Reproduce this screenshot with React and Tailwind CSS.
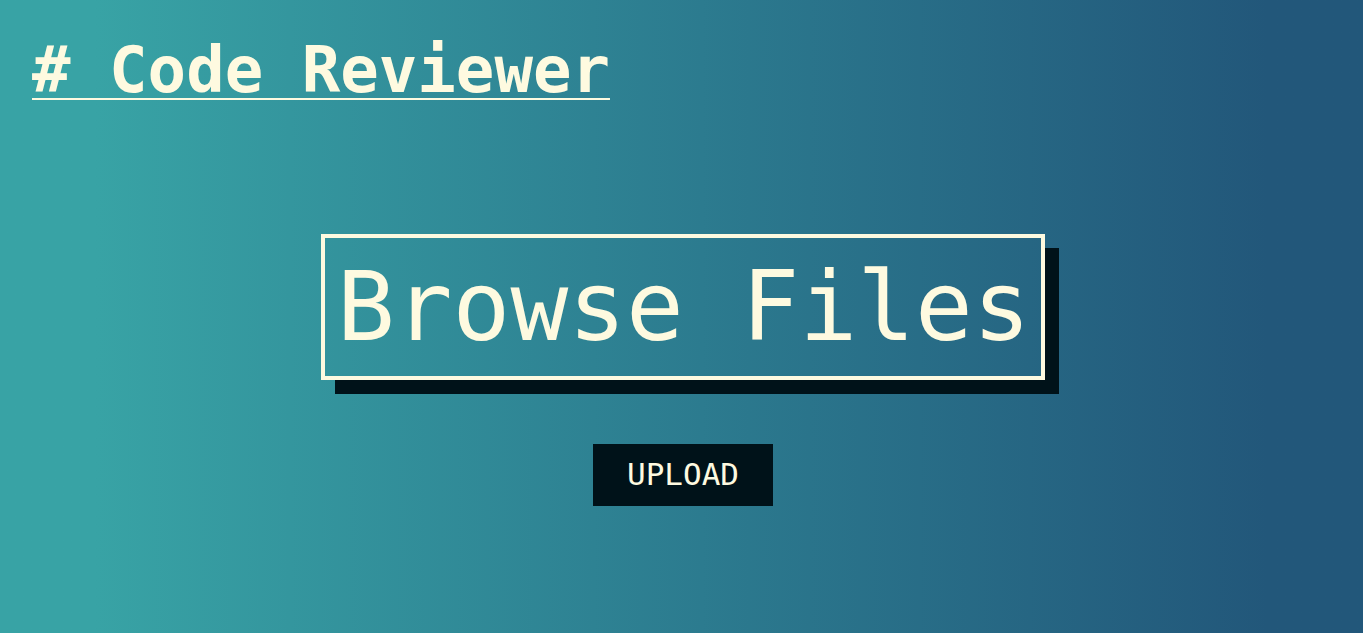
import React from "react";

const mono = { fontFamily: '"DejaVu Sans Mono", "Liberation Mono", monospace' };

const App = () => {
    return (
        <div
            className="min-h-screen w-full bg-linear-to-r from-[#38a3a5] from-[7%] to-[#22577a] to-[93%] text-[#fefae0] px-8 pt-8"
            style={mono}
        >
            <h1 className="text-[64px] leading-[1.2] font-bold underline decoration-2 underline-offset-[6px] inline-block">
                # Code Reviewer
            </h1>

            <div className="flex flex-col items-center mt-[125px] ml-[3px]">
                <button className="border-4 border-[#fefae0] px-3 text-[96px] leading-[138px] w-[724px] shadow-[14px_14px_0_#001219] whitespace-pre">
                    Browse Files
                </button>

                <button className="mt-[64px] w-[180px] h-[62px] bg-[#001219] flex items-center justify-center text-[31px] leading-none">
                    UPLOAD
                </button>
            </div>
        </div>
    );
};

export default App;
